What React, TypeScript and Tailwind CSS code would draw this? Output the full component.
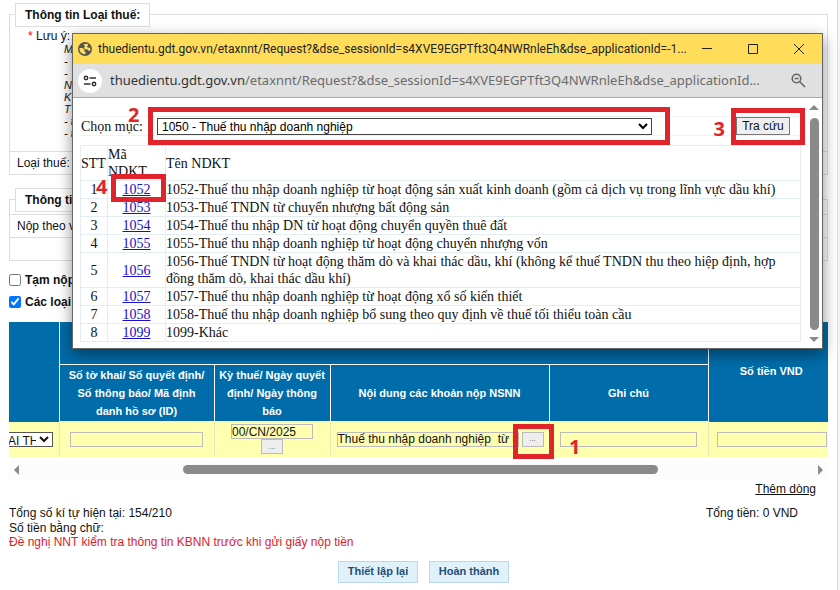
const url = {
  host: 'thuedientu.gdt.gov.vn',
  path: '/etaxnnt/Request?&dse_sessionId=s4XVE9EGPTft3Q4NWRnleEh&dse_applicationId'
};

const notes = ['M', '-', '-', 'N', 'K', 'T', '- t', '- t'];

const items = [
  { code: '1052', name: 'Thuế thu nhập doanh nghiệp từ hoạt động sản xuất kinh doanh (gồm cả dịch vụ trong lĩnh vực dầu khí)' },
  { code: '1053', name: 'Thuế TNDN từ chuyển nhượng bất động sản' },
  { code: '1054', name: 'Thuế thu nhập DN từ hoạt động chuyển quyền thuê đất' },
  { code: '1055', name: 'Thuế thu nhập doanh nghiệp từ hoạt động chuyển nhượng vốn' },
  { code: '1056', name: 'Thuế TNDN từ hoạt động thăm dò và khai thác dầu, khí (không kể thuế TNDN thu theo hiệp định, hợp đồng thăm dò, khai thác dầu khí)' },
  { code: '1057', name: 'Thuế thu nhập doanh nghiệp từ hoạt động xổ số kiến thiết' },
  { code: '1058', name: 'Thuế thu nhập doanh nghiệp bổ sung theo quy định về thuế tối thiểu toàn cầu' },
  { code: '1099', name: 'Khác' }
];

const digit = "absolute font-['Open_Sans',sans-serif] text-[20px] leading-5 font-bold text-[#e0242b]";

const TaxType = () => (
  <section className="relative mt-[14px] border border-[#ddd]">
    <h2 className="absolute -top-3 left-[5px] h-6 border border-[#ddd] bg-white px-[9px] text-[12px] leading-[23px] font-bold">
      Thông tin Loại thuế:
    </h2>
    <div className="h-[136px] pt-[14px] pl-[18px]">
      <p className="leading-[14px]"><span className="text-red-600">*</span> Lưu ý:</p>
      <ul className="pl-9 text-[11px] leading-3 italic">
        {notes.map((note, index) => (
          <li key={index}>{note}</li>
        ))}
      </ul>
    </div>
    <p className="h-[23px] border-t border-[#ddd] pl-[7px] leading-[22px]">Loại thuế: Thuế</p>
  </section>
);

const PaymentInfo = () => (
  <section className="relative mt-6 border border-[#ddd] pt-[14px]">
    <h2 className="absolute -top-3 left-[5px] h-6 border border-[#ddd] bg-white px-[9px] text-[12px] leading-[23px] font-bold">
      Thông tin
    </h2>
    <p className="h-[23px] border-t border-[#ddd] pl-[7px] leading-[22px]">Nộp theo v</p>
    <div className="h-[23px] border-t border-[#ddd]" />
  </section>
);

const PaymentTable = () => {
  const th = 'border border-white px-1 text-[11px] leading-[18px] font-bold';
  const td = 'border-r border-[#e8e8b8] p-0';
  const input = 'h-[15px] border border-[#bbb] bg-transparent';
  const dots = 'h-[15px] w-[22px] border border-[#bbb] bg-[#eee] text-[8px] leading-[10px] text-[#666]';

  return (
    <table className="mt-[9px] w-full table-fixed border-collapse text-[12px]">
      <colgroup>
        <col className="w-[50px]" />
        <col className="w-[155px]" />
        <col className="w-[116px]" />
        <col className="w-[219px]" />
        <col className="w-[159px]" />
        <col />
      </colgroup>
      <thead className="bg-[#006ca9] text-white">
        <tr className="h-[43px]">
          <th rowSpan={2} className="border-r border-white" />
          <th colSpan={4} className={th} />
          <th rowSpan={2} className="border-l border-white pl-[6px] text-[11px]">Số tiền VND</th>
        </tr>
        <tr className="h-[57px]">
          <th className={th}>Số tờ khai/ Số quyết định/ Số thông báo/ Mã định danh hồ sơ (ID)</th>
          <th className={th}>Kỳ thuế/ Ngày quyết định/ Ngày thông báo</th>
          <th className={th}>Nội dung các khoản nộp NSNN</th>
          <th className={th}>Ghi chú</th>
        </tr>
      </thead>
      <tbody className="bg-[#ffffb0]">
        <tr className="h-[35px]">
          <td className={`${td} overflow-hidden`}>
            <select aria-label="Loại" className="-ml-[6px] block h-[15px] w-[50px] border border-[#555] bg-white text-[12px] leading-[13px]">
              <option>AI TH</option>
            </select>
          </td>
          <td className={td}>
            <input aria-label="Số tờ khai" className={`${input} mx-auto block w-[133px]`} />
          </td>
          <td className={td}>
            <div className="flex flex-col items-center">
              <input aria-label="Kỳ thuế" defaultValue="00/CN/2025" className={`${input} w-[82px]`} />
              <button className={dots}>...</button>
            </div>
          </td>
          <td className={td}>
            <div className="relative flex items-center justify-between pr-[5px] pl-[6px]">
              <input aria-label="Nội dung" defaultValue="Thuế thu nhập doanh nghiệp  từ h" className={`${input} w-[182px]`} />
              <button className={dots}>...</button>
              <div className="absolute -top-[8px] -right-[5px] h-[35px] w-[41px] border-5 border-[#e0242b]" />
              <span className={`${digit} top-[5px] -right-8`}>1</span>
            </div>
          </td>
          <td className={td}>
            <input aria-label="Ghi chú" className={`${input} mx-auto block w-[137px]`} />
          </td>
          <td className="pr-px pl-2">
            <input aria-label="Số tiền" className={`${input} block w-full`} />
          </td>
        </tr>
      </tbody>
    </table>
  );
};

const HorizontalScroll = () => (
  <div className="mt-1 flex h-[18px] items-center bg-[#fcfcfc] px-[5px]">
    <div className="border-y-5 border-r-5 border-y-transparent border-r-[#8a8a8a]" />
    <div className="flex flex-1 pr-[160px] pl-[164px]">
      <div className="h-[9px] flex-1 rounded-full bg-[#8a8a8a]" />
    </div>
    <div className="border-y-5 border-l-5 border-y-transparent border-l-[#8a8a8a]" />
  </div>
);

const LookupTable = () => {
  const cell = 'border border-[#e3edf3] p-0';

  return (
    <table className="mt-[9px] w-full table-fixed border-collapse">
      <colgroup>
        <col className="w-[27px]" />
        <col className="w-[58px]" />
        <col />
      </colgroup>
      <thead>
        <tr className="h-[35px] text-left">
          <th className={`${cell} font-normal`}>STT</th>
          <th className={`${cell} font-normal`}>Mã<br />NDKT</th>
          <th className={`${cell} font-normal`}>Tên NDKT</th>
        </tr>
      </thead>
      <tbody>
        {items.map((item, index) => (
          <tr key={item.code} className="h-[18px]">
            <td className={`${cell} text-center`}>{index + 1}</td>
            <td className={`${cell} text-center`}>
              <a href="#" className="text-[#1a0dcb] underline">{item.code}</a>
            </td>
            <td className={cell}>{item.code}-{item.name}</td>
          </tr>
        ))}
      </tbody>
    </table>
  );
};

const Popup = () => (
  <div className="absolute top-[33px] right-[14px] left-[72px] border border-[#666] bg-white shadow-[0_5px_14px_rgba(0,0,0,0.45)]">
    <div className="flex h-[30px] items-center bg-[#ffdd5b] pl-[5px] font-['Roboto',sans-serif] text-[12px] text-[#222]">
      <svg width="14" height="14" viewBox="0 0 14 14" className="mr-[6px] shrink-0">
        <circle cx="7" cy="7" r="7" fill="#555" />
        <path d="M1.500 6h3l2 1.500-.3 1.500 1.300 1v2.200C4 12.500 1.200 10 1.500 6zM5.500 2.200l3.500-.5 1.500 1-1.500 1.800 1 1.200h2.200l.3 2-1.200 1.500-1.800-1.700-2.500-.3-1-1.500 1-1.200z" fill="#ffdd5b" />
      </svg>
      <span className="min-w-0 flex-1 whitespace-nowrap">{url.host}{url.path}=-1...</span>
      <button aria-label="Thu nhỏ" className="flex w-[46px] justify-center">
        <svg width="12" height="12" stroke="#222" fill="none"><path d="M1 5.500h10" /></svg>
      </button>
      <button aria-label="Phóng to" className="flex w-[46px] justify-center">
        <svg width="12" height="12" stroke="#222" fill="none"><path d="M1.500 1.500h9v9h-9z" /></svg>
      </button>
      <button aria-label="Đóng" className="flex w-[46px] justify-center">
        <svg width="12" height="12" stroke="#222" fill="none"><path d="M1 1l10 10M11 1L1 11" /></svg>
      </button>
    </div>
    <div className="flex h-[34px] items-center border-b border-[#aaa] bg-[#e0e0e0] pr-[16px] pl-[5px] font-['Noto_Sans',sans-serif] text-[13px] text-[#6b6b6b]">
      <div className="mr-2 flex size-6 shrink-0 items-center justify-center rounded-full bg-white">
        <svg width="14" height="12" stroke="#333" strokeWidth="1.500" fill="none">
          <circle cx="3" cy="3" r="1.700" />
          <path d="M6.500 3H13M1 9h6.500" />
          <circle cx="11" cy="9" r="1.700" />
        </svg>
      </div>
      <span className="min-w-0 flex-1 whitespace-nowrap">
        <span className="text-[#333]">{url.host}</span>{url.path}...
      </span>
      <button aria-label="Thu phóng" className="shrink-0">
        <svg width="15" height="15" viewBox="0 0 15 15" stroke="#666" strokeWidth="1.600" fill="none">
          <circle cx="5.500" cy="5.500" r="4.300" />
          <path d="M3.500 5.500h4M8.800 8.800l5.200 5.200" />
        </svg>
      </button>
    </div>
    <div className="flex pt-[5px]">
      <div className="min-w-0 flex-1 pt-[13px] pb-[6px] pl-[7px] font-['Liberation_Serif',serif] text-[14px] leading-[17px] text-[#111]">
        <div className="relative flex h-5 items-center border-y border-[#eef3f6]">
          <label htmlFor="muc" className="w-[77px] pl-px whitespace-nowrap">Chọn mục:</label>
          <select id="muc" className="h-[17px] min-w-0 flex-1 border border-[#444] bg-white font-['Liberation_Sans',sans-serif] text-[12px] leading-[14px] text-black">
            <option>1050 - Thuế thu nhập doanh nghiệp</option>
          </select>
          <button className="mr-[11px] ml-[84px] h-[18px] w-[54px] border border-[#777] bg-[#efefef] font-['Liberation_Sans',sans-serif] text-[12px] leading-4">Tra cứu</button>
          <div className="absolute -top-[10px] right-[131px] left-[68px] h-[38px] border-5 border-[#e0242b]" />
          <div className="absolute -top-[9px] -right-[4px] h-[37px] w-[74px] border-5 border-[#e0242b]" />
          <span className={`${digit} -top-3 left-12`}>2</span>
          <span className={`${digit} top-[2px] right-[76px]`}>3</span>
        </div>
        <div className="relative">
          <LookupTable />
          <div className="absolute top-[29px] left-[31px] h-7 w-[55px] border-5 border-[#e0242b]" />
          <span className={`${digit} top-8 left-4`}>4</span>
        </div>
      </div>
      <div className="flex w-[21px] flex-col items-center pt-[2px] pb-[6px] pl-[5px]">
        <div className="border-x-5 border-b-5 border-x-transparent border-b-[#8a8a8a]" />
        <div className="mt-2 mb-[7px] w-[9px] flex-1 rounded-full bg-[#8a8a8a]" />
        <div className="border-x-5 border-t-5 border-x-transparent border-t-[#8a8a8a]" />
      </div>
    </div>
  </div>
);

const App = () => {
  const action = 'h-[22px] w-20 border border-[#b9d9ea] bg-[#e1f1fa] text-[11px] font-bold text-[#1f4e79]';

  return (
    <div className="bg-[#f5f5f5] pr-[3px] font-['Liberation_Sans',Arial,sans-serif] text-[12px] text-[#111]">
      <main className="relative -mr-px flow-root min-h-screen border-r border-[#ddd] bg-white pr-[9px] pl-[9px]">
        <TaxType />
        <PaymentInfo />
        <div className="mt-[11px] space-y-1 font-bold">
          <label className="flex h-4 items-center gap-1">
            <input type="checkbox" className="size-3" /> Tạm nộp
          </label>
          <label className="flex h-5 items-center gap-1">
            <input type="checkbox" defaultChecked className="size-3" /> Các loại
          </label>
        </div>
        <PaymentTable />
        <HorizontalScroll />
        <div className="mt-[2px] pr-3 text-right leading-4">
          <a href="#" className="underline">Thêm dòng</a>
        </div>
        <div className="mt-2 flex justify-between pr-[30px] leading-4">
          <span>Tổng số kí tự hiện tại: 154/210</span>
          <span>Tổng tiền: 0 VND</span>
        </div>
        <p className="leading-[14px]">Số tiền bằng chữ:</p>
        <p className="leading-[14px] text-[#e0202b]">Đề nghị NNT kiểm tra thông tin KBNN trước khi gửi giấy nộp tiền</p>
        <div className="mt-3 flex justify-center gap-[11px] pb-2 pl-[10px]">
          <button className={action}>Thiết lập lại</button>
          <button className={action}>Hoàn thành</button>
        </div>
        <Popup />
      </main>
    </div>
  );
};

export default App;
